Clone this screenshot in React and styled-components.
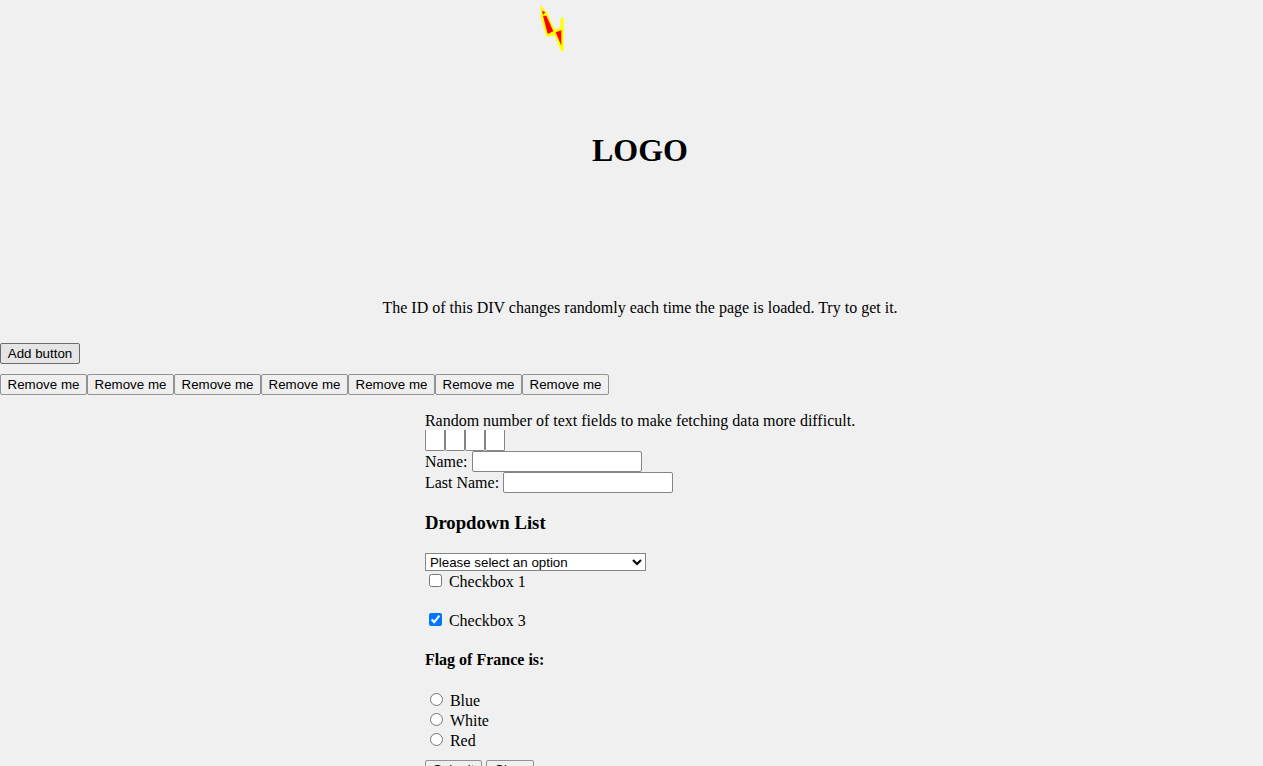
import React, { useState } from "react";
import styled, { createGlobalStyle } from "styled-components";

const GlobalStyle = createGlobalStyle`
  html {
    scrollbar-width: none;
  }
  body {
    margin: 0;
    background: #f0f0f0;
    color: #000;
    font-family: "Liberation Serif", "Times New Roman", serif;
    font-size: 16px;
    line-height: 18px;
  }
`;

const Centered = styled.div`
  display: flex;
  flex-direction: column;
  align-items: center;
  padding-left: 17px;
`;

const Logo = styled.header`
  display: grid;
  width: 200px;
  height: 299px;
`;

const Bolt = styled.svg`
  grid-area: 1 / 1;
  display: block;
  width: 24px;
  height: 47px;
  margin-top: 5px;
`;

const LogoText = styled.h1`
  grid-area: 1 / 1;
  place-self: center;
  margin: 0;
  font-size: 32px;
  line-height: 36px;
`;

const Notice = styled.p`
  margin: 0 16px;
`;

const Button = styled.button`
  height: 21px;
  padding: 0 6px;
  border: 1px solid ${(p) => (p.$active ? "#6b6b6b" : "#929292")};
  border-radius: 2px;
  background: ${(p) => (p.$active ? "#e5e5e5" : "#efefef")};
  color: #000;
  font-family: "Liberation Sans", Arial, sans-serif;
  white-space: nowrap;
`;

const AddButton = styled(Button)`
  width: 80px;
`;

const RemoveButton = styled(Button)`
  width: 87px;
`;

const FormButton = styled(Button)`
  padding: 0 7px 2px;
`;

const Toolbar = styled.div`
  display: flex;
  flex-direction: column;
  align-items: flex-start;
  gap: 10px;
  margin: 26px 0 17px;
`;

const ButtonRow = styled.div`
  display: flex;
  flex-wrap: wrap;
`;

const Form = styled.form`
  display: flex;
  flex-direction: column;
  align-items: flex-start;
`;

const TextInput = styled.input`
  box-sizing: border-box;
  width: 170px;
  height: 21px;
  padding: 1px 2px;
  border: 1px solid #858585;
  border-radius: 2px;
  background: #fff;
`;

const SmallInput = styled(TextInput)`
  width: 20px;
  border-top: 0;
  border-radius: 0 0 2px 2px;
`;

const SmallFields = styled.div`
  display: flex;
`;

const Field = styled.div`
  display: flex;
  align-items: center;
  gap: 4px;
`;

const SectionTitle = styled.h3`
  margin: 19px 0;
  line-height: 22px;
`;

const Question = styled.h4`
  margin: 21px 0;
`;

const Select = styled.select`
  box-sizing: border-box;
  width: 221px;
  height: 18px;
  padding: 0;
  border: 1px solid #858585;
  border-radius: 0;
  background: #fff;
  color: #000;
  font-family: "Liberation Sans", Arial, sans-serif;
`;

const CheckList = styled.div`
  display: flex;
  flex-direction: column;
  gap: 19px;
`;

const Choice = styled.div`
  display: flex;
  align-items: flex-start;
  gap: 4px;
  height: 20px;
  line-height: 22px;
`;

const Checkbox = styled.input`
  margin: 3px 3px 3px 4px;
`;

const Radio = styled.input`
  margin: 3px 3px 0 5px;
`;

const Actions = styled.div`
  display: flex;
  gap: 4px;
  margin: 10px 0 16px;
`;

const colours = ["Blue", "White", "Red"];

export default function App() {
  const [buttons, setButtons] = useState([1, 2, 3, 4, 5, 6, 7]);

  return (
    <>
      <GlobalStyle />
      <Centered>
        <Logo>
          <Bolt viewBox="60 15 72 141" aria-hidden="true">
            <path
              fill="#ff0"
              stroke="#ff0"
              strokeWidth="2"
              d="M61 19L63 17L70 29L81 38L83 46L104 90L122 84L123 54H130V153H124L104 105L80 110L62 46L65 43Z"
            />
            <path
              fill="#f00"
              d="M66 32L76 37L69 44ZM69 47H79L100 94L83 102ZM107 97L124 91V137Z"
            />
          </Bolt>
          <LogoText>LOGO</LogoText>
        </Logo>
        <Notice>
          The ID of this DIV changes randomly each time the page is loaded. Try to get it.
        </Notice>
      </Centered>

      <Toolbar>
        <AddButton
          type="button"
          $active
          onClick={() => setButtons([...buttons, Math.max(0, ...buttons) + 1])}
        >
          Add button
        </AddButton>
        <ButtonRow>
          {buttons.map((id) => (
            <RemoveButton
              key={id}
              type="button"
              onClick={() => setButtons(buttons.filter((b) => b !== id))}
            >
              Remove me
            </RemoveButton>
          ))}
        </ButtonRow>
      </Toolbar>

      <Centered>
        <Form onSubmit={(e) => e.preventDefault()}>
          <div>Random number of text fields to make fetching data more difficult.</div>
          <SmallFields>
            {[1, 2, 3, 4].map((n) => (
              <SmallInput key={n} type="text" aria-label={`Text field ${n}`} />
            ))}
          </SmallFields>
          <Field>
            <label htmlFor="name">Name:</label>
            <TextInput id="name" type="text" />
          </Field>
          <Field>
            <label htmlFor="last-name">Last Name:</label>
            <TextInput id="last-name" type="text" />
          </Field>

          <SectionTitle id="dropdown-title">Dropdown List</SectionTitle>
          <Select aria-labelledby="dropdown-title">
            <option>Please select an option</option>
          </Select>
          <CheckList>
            <Choice>
              <Checkbox id="check-1" type="checkbox" />
              <label htmlFor="check-1">Checkbox 1</label>
            </Choice>
            <Choice>
              <Checkbox id="check-3" type="checkbox" defaultChecked />
              <label htmlFor="check-3">Checkbox 3</label>
            </Choice>
          </CheckList>

          <Question id="flag-title">Flag of France is:</Question>
          <div role="radiogroup" aria-labelledby="flag-title">
            {colours.map((c) => (
              <Choice key={c}>
                <Radio id={`flag-${c}`} type="radio" name="flag" value={c} />
                <label htmlFor={`flag-${c}`}>{c}</label>
              </Choice>
            ))}
          </div>
          <Actions>
            <FormButton type="submit">Submit</FormButton>
            <FormButton type="reset">Clear</FormButton>
          </Actions>
        </Form>
      </Centered>
    </>
  );
}
